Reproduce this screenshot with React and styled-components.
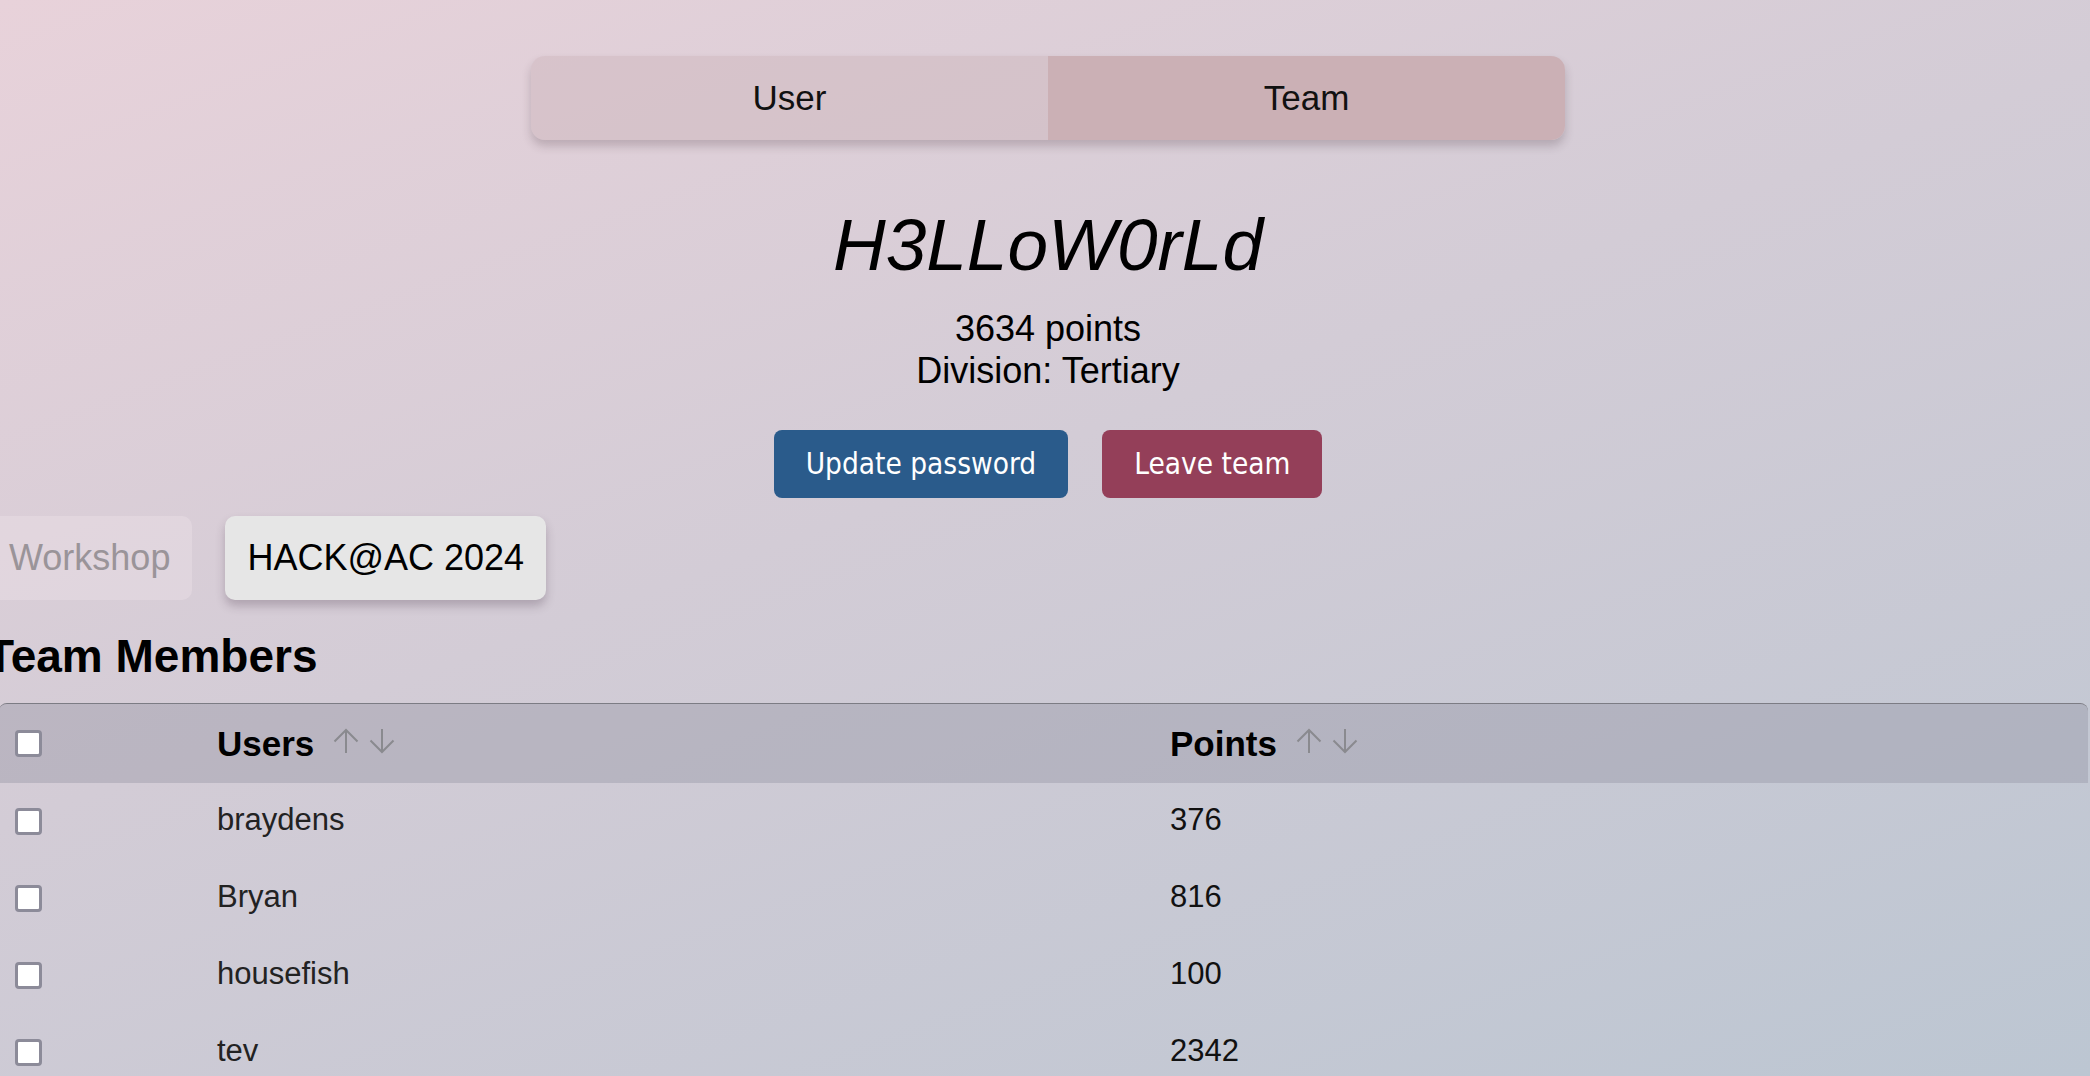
import React from 'react'
import styled, { createGlobalStyle } from 'styled-components'

const GlobalStyle = createGlobalStyle`
  html, body {
    margin: 0;
    padding: 0;
    min-height: 100%;
  }
  body {
    font-family: "Liberation Sans", Arial, sans-serif;
    background: linear-gradient(160deg, #e8d2da 0%, #d3ccd6 45%, #bcc6d2 100%);
    background-attachment: fixed;
    min-height: 100vh;
    overflow: hidden;
  }
`

const members = [
  { name: 'braydens', points: 376 },
  { name: 'Bryan', points: 816 },
  { name: 'housefish', points: 100 },
  { name: 'tev', points: 2342 },
]

function SortArrows() {
  return (
    <Arrows>
      <svg width="26" height="26" viewBox="0 0 26 26" fill="none" stroke="currentColor" strokeWidth="2">
        <path d="M13 25V2" />
        <path d="M1.5 13.5L13 2l11.5 11.5" />
      </svg>
      <svg width="26" height="26" viewBox="0 0 26 26" fill="none" stroke="currentColor" strokeWidth="2">
        <path d="M13 1v23" />
        <path d="M1.5 12.5L13 24l11.5-11.5" />
      </svg>
    </Arrows>
  )
}

function App() {
  return (
    <Page>
      <GlobalStyle />

      <Header>
        <Toggle>
          <Segment>User</Segment>
          <Segment active>Team</Segment>
        </Toggle>

        <TeamName>H3LLoW0rLd</TeamName>

        <Stats>
          <div>3634 points</div>
          <div>Division: Tertiary</div>
        </Stats>

        <Actions>
          <ActionButton color="#2a5b8b">Update password</ActionButton>
          <ActionButton color="#943f59">Leave team</ActionButton>
        </Actions>
      </Header>

      <Chips>
        <Chip>Workshop</Chip>
        <Chip active>HACK@AC 2024</Chip>
      </Chips>

      <Heading>Team Members</Heading>

      <Table>
        <HeadRow>
          <CheckCell><Box /></CheckCell>
          <HeadCell>Users <SortArrows /></HeadCell>
          <HeadCell>Points <SortArrows /></HeadCell>
        </HeadRow>
        {members.map(m => (
          <Row key={m.name}>
            <CheckCell><Box /></CheckCell>
            <NameCell>{m.name}</NameCell>
            <PointsCell>{m.points}</PointsCell>
          </Row>
        ))}
      </Table>
    </Page>
  )
}

export default App

const Page = styled.div`
  display: flex;
  flex-direction: column;
  width: 2090px;
  min-height: 100vh;
  padding-top: 56px;
  box-sizing: border-box;
`

const Header = styled.div`
  display: flex;
  flex-direction: column;
  align-items: center;
  padding-left: 6px;
`

const Toggle = styled.div`
  display: flex;
  width: 1034px;
  height: 84px;
  border-radius: 14px;
  overflow: hidden;
  box-shadow: 0 6px 10px rgba(60, 40, 50, 0.22);
`

const Segment = styled.div`
  flex: 1;
  display: flex;
  align-items: center;
  justify-content: center;
  font-size: 35px;
  color: #111;
  background: ${p => (p.active ? '#cbb0b5' : 'rgba(205, 180, 186, 0.45)')};
`

const TeamName = styled.h1`
  margin: 69px 0 0;
  font-size: 73px;
  line-height: 72px;
  font-style: italic;
  font-weight: normal;
  color: #000;
`

const Stats = styled.div`
  margin-top: 27px;
  font-size: 36px;
  line-height: 42px;
  text-align: center;
  color: #000;
`

const Actions = styled.div`
  display: flex;
  gap: 34px;
  margin-top: 38px;
`

const ActionButton = styled.button`
  height: 68px;
  padding: 0 32px;
  border: none;
  border-radius: 8px;
  background: ${p => p.color};
  color: #fff;
  font-family: "DejaVu Sans Condensed", "DejaVu Sans", sans-serif;
  font-stretch: condensed;
  font-size: 29.5px;
  cursor: pointer;
`

const Chips = styled.div`
  display: flex;
  gap: 33px;
  margin: 18px 0 0 -13px;
`

const Chip = styled.div`
  height: 84px;
  display: flex;
  align-items: center;
  padding: 0 22px;
  border-radius: 10px;
  font-size: 36px;
  color: ${p => (p.active ? '#000' : '#9a9499')};
  background: ${p => (p.active ? '#e6e6e6' : 'rgba(235, 225, 230, 0.45)')};
  box-shadow: ${p => (p.active ? '0 6px 10px rgba(60, 40, 60, 0.25)' : 'none')};
`

const Heading = styled.h2`
  margin: 29px 0 0 -14px;
  font-size: 46px;
  line-height: 54px;
  font-weight: bold;
  color: #000;
`

const Table = styled.div`
  width: 2089px;
  margin: 20px 0 0 -1px;
  border-top: 1px solid #7c7c84;
  border-radius: 8px 8px 0 0;
  overflow: hidden;
`

const Row = styled.div`
  display: grid;
  grid-template-columns: 218px 953px 1fr;
  align-items: center;
  height: 77px;
`

const HeadRow = styled(Row)`
  height: 79px;
  background: rgba(145, 145, 160, 0.38);
`

const CheckCell = styled.div`
  padding-left: 16px;
  display: flex;
  align-items: center;
`

const Box = styled.span`
  width: 21px;
  height: 21px;
  border: 3px solid #8c8b99;
  border-radius: 4px;
  background: #fff;
`

const HeadCell = styled.div`
  display: flex;
  align-items: center;
  gap: 19px;
  font-size: 35px;
  font-weight: bold;
  color: #000;
`

const Arrows = styled.span`
  display: flex;
  gap: 10px;
  color: #8a8a8f;
  margin-top: -6px;
`

const NameCell = styled.div`
  font-size: 31px;
  color: #222;
  margin-top: -4px;
`

const PointsCell = styled(NameCell)`
  color: #111;
`
